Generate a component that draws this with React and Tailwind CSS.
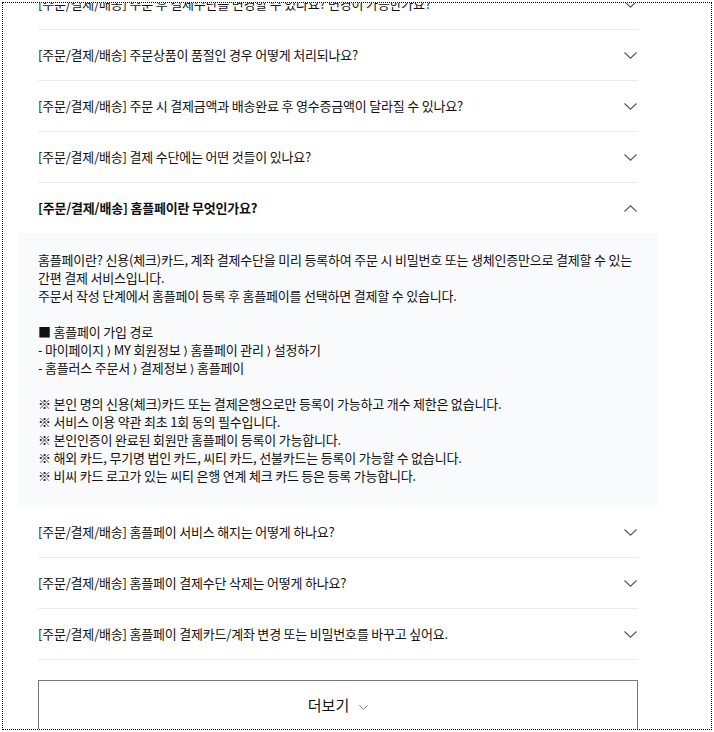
import React from "react";

const Chevron = ({ up = false, className = "" }) => (
  <svg width="13" height="7" viewBox="0 0 13 7" className={className} fill="none">
    {up ? (
      <polyline points="0.5,6.5 6.5,0.8 12.5,6.5" stroke="#555" strokeWidth="1.1" />
    ) : (
      <polyline points="0.5,0.5 6.5,6.2 12.5,0.5" stroke="#555" strokeWidth="1.1" />
    )}
  </svg>
);

const Row = ({ text, open = false }) => (
  <div className={`flex items-center justify-between ${open ? "h-[50px]" : "h-[51px] border-b border-[#ebebeb]"}`}>
    <span className={`whitespace-nowrap text-[13px] tracking-[-0.2px] text-[#111] ${open ? "font-bold" : ""}`}>{text}</span>
    <Chevron up={open} className="mr-[1px]" />
  </div>
);

const Gt = () => <span className="font-['DejaVu_Sans'] text-[12px]">⟩</span>;

const lines = [
  "홈플페이란? 신용(체크)카드, 계좌 결제수단을 미리 등록하여 주문 시 비밀번호 또는 생체인증만으로 결제할 수 있는",
  "간편 결제 서비스입니다.",
  "주문서 작성 단계에서 홈플페이 등록 후 홈플페이를 선택하면 결제할 수 있습니다.",
  "",
  "■ 홈플페이 가입 경로",
  <>- 마이페이지 <Gt /> MY 회원정보 <Gt /> 홈플페이 관리 <Gt /> 설정하기</>,
  <>- 홈플러스 주문서 <Gt /> 결제정보 <Gt /> 홈플페이</>,
  "",
  "※ 본인 명의 신용(체크)카드 또는 결제은행으로만 등록이 가능하고 개수 제한은 없습니다.",
  "※ 서비스 이용 약관 최초 1회 동의 필수입니다.",
  "※ 본인인증이 완료된 회원만 홈플페이 등록이 가능합니다.",
  "※ 해외 카드, 무기명 법인 카드, 씨티 카드, 선불카드는 등록이 가능할 수 없습니다.",
  "※ 비씨 카드 로고가 있는 씨티 은행 연계 체크 카드 등은 등록 가능합니다.",
];

export default function App() {
  return (
    <div
      className="m-[2px] h-[728px] w-[710px] overflow-hidden border border-dotted border-black bg-white"
      style={{ fontFamily: '"Noto Sans CJK KR", "Noto Sans", sans-serif' }}
    >
      <div className="ml-[35px] mt-[-24px] w-[600px]">
        <Row text="[주문/결제/배송] 주문 후 결제수단을 변경할 수 있나요? 변경이 가능한가요?" />
        <Row text="[주문/결제/배송] 주문상품이 품절인 경우 어떻게 처리되나요?" />
        <Row text="[주문/결제/배송] 주문 시 결제금액과 배송완료 후 영수증금액이 달라질 수 있나요?" />
        <Row text="[주문/결제/배송] 결제 수단에는 어떤 것들이 있나요?" />
        <Row text="[주문/결제/배송] 홈플페이란 무엇인가요?" open />
        <div className="-mx-5 bg-[#f9fafc] px-5 pt-[18px] pb-[22px]">
          {lines.map((l, i) => (
            <div key={i} className="h-[18px] whitespace-nowrap text-[13px] leading-[18px] tracking-[-0.2px] text-[#111]">
              {l || "\u00a0"}
            </div>
          ))}
        </div>
        <Row text="[주문/결제/배송] 홈플페이 서비스 해지는 어떻게 하나요?" />
        <Row text="[주문/결제/배송] 홈플페이 결제수단 삭제는 어떻게 하나요?" />
        <Row text="[주문/결제/배송] 홈플페이 결제카드/계좌 변경 또는 비밀번호를 바꾸고 싶어요." />
        <div className="mt-5 flex h-[50px] items-center justify-center gap-[10px] border border-[#777]">
          <span className="text-[15px] text-[#111]">더보기</span>
          <Chevron className="mt-[4px] h-[5px] w-[9px]" />
        </div>
      </div>
    </div>
  );
}
